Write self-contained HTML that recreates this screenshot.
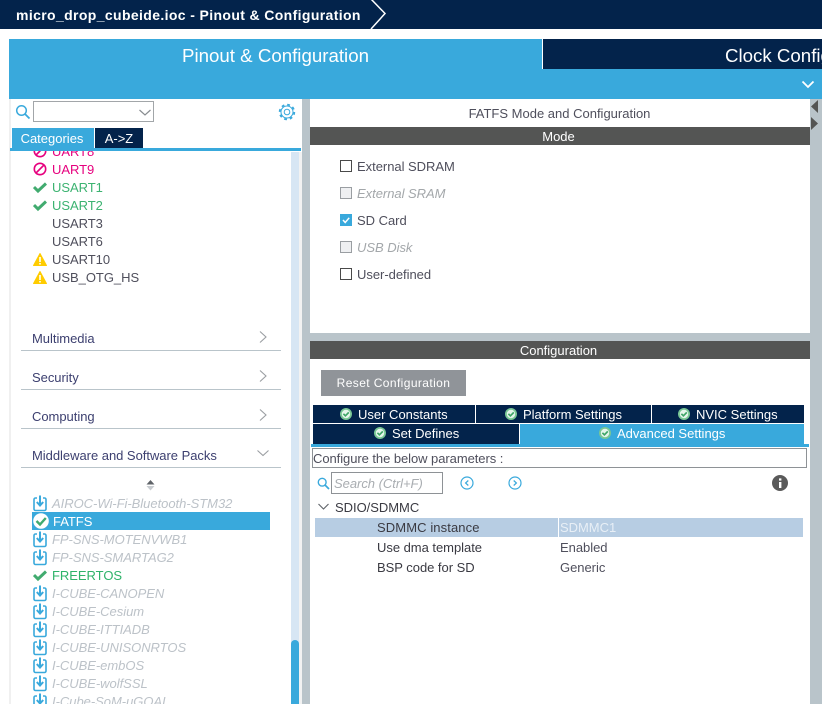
<!DOCTYPE html>
<html><head><meta charset="utf-8">
<style>
html,body{margin:0;padding:0;background:#fff}
#p{position:relative;width:822px;height:704px;overflow:hidden;background:#fff;font-family:"Liberation Sans",sans-serif;font-size:13px;color:#4f4f5c}
#p div,#p svg{position:absolute}
.t{white-space:nowrap;line-height:18px;height:18px;margin-top:1px;letter-spacing:-.03px}
.i{font-style:italic;color:#bcc2c8}
.mag{color:#e6007e}.grn{color:#3cb371}
.cat{left:21px;width:260px;height:1px;background:#b9c4ca}
.tab{background:#03234b}
.tt{color:#fff;white-space:nowrap;line-height:18px;height:18px;margin-top:1px}
</style></head><body>
<div id="p">
<svg width="0" height="0" style="position:absolute"><defs>
<g id="dl"><rect x="1" y="3" width="12" height="12.5" rx="1.5" fill="none" stroke="#39a9dc" stroke-width="1.6"/><rect x="4" y="0" width="6" height="4" fill="#fff"/><path d="M7 0.5V10M3.8 7L7 10.5L10.2 7" fill="none" stroke="#39a9dc" stroke-width="2"/></g>
<path id="ck" d="M1 6L5 10L13 2.5" fill="none" stroke="#41ab6f" stroke-width="3"/>
<g id="wn"><path d="M7 0.5L13.5 12.5H0.5Z" fill="#ffcc00" stroke="#ffcc00" stroke-linejoin="round"/><rect x="6.2" y="4" width="1.6" height="5" fill="#fff"/><rect x="6.2" y="10" width="1.6" height="1.5" fill="#fff"/></g>
<g id="no"><circle cx="7" cy="7" r="5.7" fill="none" stroke="#e6007e" stroke-width="1.6"/><path d="M3 11L11 3" stroke="#e6007e" stroke-width="1.6"/></g>
<g id="gc"><circle cx="6" cy="6" r="6" fill="#79c795"/><circle cx="6" cy="6" r="4.2" fill="#e6f5eb"/><path d="M3.4 5.8L5.4 7.8L8.8 4.4" fill="none" stroke="#3fa568" stroke-width="1.7"/></g>
</defs></svg>

<!-- top bar -->
<div style="left:0;top:0;width:822px;height:29px;background:#03234b"></div>
<div class="t" style="left:16px;top:5px;color:#fff;font-weight:bold;font-size:14px;letter-spacing:.37px">micro_drop_cubeide.ioc - Pinout &amp; Configuration</div>
<svg style="left:368px;top:0" width="20" height="29"><path d="M3 -1L17 13.5L3 29" fill="none" stroke="#fff" stroke-width="1.5"/></svg>

<!-- main tabs -->
<div style="left:9px;top:39px;width:813px;height:60px;background:#39a9dc"></div>
<div style="left:543px;top:39px;width:279px;height:30px;background:#03234b;border-left:1px solid #fff;margin-left:-1px"></div>
<div class="t" style="left:182px;top:44px;height:22px;line-height:22px;color:#fff;font-size:18.7px;letter-spacing:0">Pinout &amp; Configuration</div>
<div class="t" style="left:725px;top:44px;height:22px;line-height:22px;color:#fff;font-size:18.7px;letter-spacing:0">Clock Configuration</div>
<svg style="left:800px;top:79px" width="16" height="12"><path d="M2.5 2.5L8 8L13.5 2.5" fill="none" stroke="#fff" stroke-width="1.8"/></svg>

<!-- left panel -->
<div style="left:9px;top:99px;width:2px;height:605px;background:#f0f0f0"></div>
<svg style="left:15px;top:104px" width="16" height="16"><circle cx="6.5" cy="6.5" r="4.8" fill="none" stroke="#39a9dc" stroke-width="1.5"/><path d="M10 10L14.5 14.5" stroke="#39a9dc" stroke-width="1.8"/></svg>
<div style="left:33px;top:101px;width:119px;height:19px;background:#fff;border:1.5px solid #a2a6a9"></div>
<svg style="left:138px;top:108px" width="14" height="10"><path d="M1.5 2L7 7L12.5 2" fill="none" stroke="#888c90" stroke-width="1.2"/></svg>
<svg style="left:278px;top:103px" width="18" height="18" viewBox="0 0 18 18"><circle cx="9" cy="9" r="2.8" fill="none" stroke="#39a9dc" stroke-width="1"/><circle cx="9" cy="9" r="6" fill="none" stroke="#39a9dc" stroke-width="1"/><circle cx="9" cy="9" r="7.3" fill="none" stroke="#39a9dc" stroke-width="1.8" stroke-dasharray="2.8 2.93"/></svg>
<div style="left:12px;top:128px;width:80px;height:20px;background:#39a9dc;color:#fff;text-align:center;line-height:21px;padding-right:2px">Categories</div>
<div style="left:95px;top:128px;width:48px;height:20px;background:#03234b;color:#fff;text-align:center;line-height:21px">A-&gt;Z</div>
<div style="left:10px;top:148px;width:291px;height:3px;background:#39a9dc"></div>

<div style="left:291px;top:152px;width:8px;height:552px;background:#d7e6f4"></div>
<div style="left:299px;top:152px;width:3px;height:552px;background:#f2f2f2"></div>
<div style="left:291px;top:640px;width:8px;height:64px;background:#39a9dc;border-radius:4px 4px 0 0"></div>
<div style="left:302px;top:99px;width:8px;height:605px;background:#b9c4ca"></div>

<!-- list (clip) -->
<div style="left:11px;top:151px;width:280px;height:553px;overflow:hidden">
<div class="t mag" style="left:41px;top:-9px">UART8</div>
<svg style="left:22px;top:-7px" width="14" height="14"><use href="#no"/></svg>
<svg style="left:22px;top:11px" width="14" height="14"><use href="#no"/></svg>
<div class="t mag" style="left:41px;top:9px">UART9</div>
<svg style="left:22px;top:30px" width="14" height="13"><use href="#ck"/></svg>
<div class="t grn" style="left:41px;top:27px">USART1</div>
<svg style="left:22px;top:48px" width="14" height="13"><use href="#ck"/></svg>
<div class="t grn" style="left:41px;top:45px">USART2</div>
<div class="t" style="left:41px;top:63px">USART3</div>
<div class="t" style="left:41px;top:81px">USART6</div>
<svg style="left:22px;top:102px" width="14" height="14"><use href="#wn"/></svg>
<div class="t" style="left:41px;top:99px">USART10</div>
<svg style="left:22px;top:120px" width="14" height="14"><use href="#wn"/></svg>
<div class="t" style="left:41px;top:117px">USB_OTG_HS</div>
</div>

<div class="t" style="left:32px;top:329px;color:#3d4070">Multimedia</div>
<div class="cat" style="top:350px"></div>
<svg style="left:258px;top:330px" width="10" height="14"><path d="M2 1.5L8 7L2 12.5" fill="none" stroke="#9a9ea2" stroke-width="1.1"/></svg>
<div class="t" style="left:32px;top:368px;color:#3d4070">Security</div>
<div class="cat" style="top:389px"></div>
<svg style="left:258px;top:369px" width="10" height="14"><path d="M2 1.5L8 7L2 12.5" fill="none" stroke="#9a9ea2" stroke-width="1.1"/></svg>
<div class="t" style="left:32px;top:407px;color:#3d4070">Computing</div>
<div class="cat" style="top:428px"></div>
<svg style="left:258px;top:408px" width="10" height="14"><path d="M2 1.5L8 7L2 12.5" fill="none" stroke="#9a9ea2" stroke-width="1.1"/></svg>
<div class="t" style="left:32px;top:446px;color:#3d4070">Middleware and Software Packs</div>
<div class="cat" style="top:467px"></div>
<svg style="left:256px;top:449px" width="14" height="10"><path d="M1.5 1.5L7 6.5L12.5 1.5" fill="none" stroke="#9a9ea2" stroke-width="1.1"/></svg>

<svg style="left:145px;top:479px" width="11" height="13"><path d="M5.5 1L9.5 5.5H1.5Z" fill="#5f6368"/><path d="M1.5 7H9.5L5.5 11.5Z" fill="#c8ccd0"/></svg>

<svg style="left:33px;top:495px" width="14" height="17"><use href="#dl"/></svg>
<div class="t i" style="left:52px;top:494px">AIROC-Wi-Fi-Bluetooth-STM32</div>
<div style="left:32px;top:512px;width:238px;height:18px;background:#39a9dc"></div>
<svg style="left:33px;top:512px" width="17" height="18"><circle cx="8" cy="9" r="7.8" fill="#fff"/><path d="M3.5 9L7 12.5L12.8 6" fill="none" stroke="#41ab6f" stroke-width="2.4"/></svg>
<div class="t" style="left:53px;top:512px;color:#fff">FATFS</div>
<svg style="left:33px;top:531px" width="14" height="17"><use href="#dl"/></svg>
<div class="t i" style="left:52px;top:530px">FP-SNS-MOTENVWB1</div>
<svg style="left:33px;top:549px" width="14" height="17"><use href="#dl"/></svg>
<div class="t i" style="left:52px;top:548px">FP-SNS-SMARTAG2</div>
<svg style="left:33px;top:569px" width="14" height="13"><use href="#ck"/></svg>
<div class="t" style="left:52px;top:566px;color:#2fb36a">FREERTOS</div>
<svg style="left:33px;top:585px" width="14" height="17"><use href="#dl"/></svg>
<div class="t i" style="left:52px;top:584px">I-CUBE-CANOPEN</div>
<svg style="left:33px;top:603px" width="14" height="17"><use href="#dl"/></svg>
<div class="t i" style="left:52px;top:602px">I-CUBE-Cesium</div>
<svg style="left:33px;top:621px" width="14" height="17"><use href="#dl"/></svg>
<div class="t i" style="left:52px;top:620px">I-CUBE-ITTIADB</div>
<svg style="left:33px;top:639px" width="14" height="17"><use href="#dl"/></svg>
<div class="t i" style="left:52px;top:638px">I-CUBE-UNISONRTOS</div>
<svg style="left:33px;top:657px" width="14" height="17"><use href="#dl"/></svg>
<div class="t i" style="left:52px;top:656px">I-CUBE-embOS</div>
<svg style="left:33px;top:675px" width="14" height="17"><use href="#dl"/></svg>
<div class="t i" style="left:52px;top:674px">I-CUBE-wolfSSL</div>
<svg style="left:33px;top:693px" width="14" height="17"><use href="#dl"/></svg>
<div class="t i" style="left:52px;top:692px">I-Cube-SoM-uGOAL</div>

<!-- right side -->
<div style="left:810px;top:99px;width:12px;height:605px;background:#b9c4ca"></div>
<svg style="left:811px;top:99px" width="11" height="32"><path d="M7 1V14L0 7.5Z" fill="#545554"/><path d="M0 18V31L7 24.5Z" fill="#545554"/></svg>
<div style="left:310px;top:333px;width:500px;height:8px;background:#b9c4ca"></div>

<div class="t" style="left:310px;top:104px;width:499px;text-align:center;letter-spacing:0">FATFS Mode and Configuration</div>
<div style="left:310px;top:127px;width:500px;height:18px;background:#545554"></div>
<div class="t" style="left:310px;top:126px;width:497px;text-align:center;color:#fff;height:19px;line-height:19px;letter-spacing:0">Mode</div>

<div style="left:340px;top:160px;width:10px;height:10px;border:1px solid #4a4a4a;background:#fff"></div>
<div class="t" style="left:357px;top:157px">External SDRAM</div>
<div style="left:340px;top:187px;width:10px;height:10px;border:1px solid #9a9ea2;background:#eff0f2"></div>
<div class="t" style="left:357px;top:184px;font-style:italic;color:#a3a7aa">External SRAM</div>
<div style="left:340px;top:214px;width:12px;height:12px;background:#39a9dc"></div>
<svg style="left:340px;top:214px" width="12" height="12"><path d="M3 6L5.2 8.5L9.2 3.8" fill="none" stroke="#fff" stroke-width="1.5"/></svg>
<div class="t" style="left:357px;top:211px">SD Card</div>
<div style="left:340px;top:241px;width:10px;height:10px;border:1px solid #9a9ea2;background:#eff0f2"></div>
<div class="t" style="left:357px;top:238px;font-style:italic;color:#a3a7aa">USB Disk</div>
<div style="left:340px;top:268px;width:10px;height:10px;border:1px solid #4a4a4a;background:#fff"></div>
<div class="t" style="left:357px;top:265px">User-defined</div>

<div style="left:310px;top:341px;width:500px;height:18px;background:#545554"></div>
<div class="t" style="left:310px;top:340px;width:497px;text-align:center;color:#fff;height:19px;line-height:19px;letter-spacing:0">Configuration</div>
<div style="left:321px;top:370px;width:145px;height:26px;background:#909499;color:#fff;text-align:center;line-height:27px;font-size:12px;letter-spacing:.4px">Reset Configuration</div>

<div class="tab" style="left:313px;top:405px;width:162px;height:18px"></div>
<div class="tt" style="left:358px;top:405px">User Constants</div>
<svg style="left:340px;top:408px" width="12" height="12"><use href="#gc"/></svg>
<div class="tab" style="left:476px;top:405px;width:175px;height:18px"></div>
<div class="tt" style="left:523px;top:405px">Platform Settings</div>
<svg style="left:505px;top:408px" width="12" height="12"><use href="#gc"/></svg>
<div class="tab" style="left:652px;top:405px;width:152px;height:18px"></div>
<div class="tt" style="left:696px;top:405px">NVIC Settings</div>
<svg style="left:678px;top:408px" width="12" height="12"><use href="#gc"/></svg>
<div class="tab" style="left:313px;top:424px;width:206px;height:20px"></div>
<div class="tt" style="left:392px;top:424px">Set Defines</div>
<svg style="left:374px;top:427px" width="12" height="12"><use href="#gc"/></svg>
<div class="tab" style="left:520px;top:424px;width:284px;height:20px;background:#39a9dc"></div>
<div class="tt" style="left:617px;top:424px">Advanced Settings</div>
<svg style="left:599px;top:427px" width="12" height="12"><use href="#gc"/></svg>
<div style="left:311px;top:444px;width:498px;height:3px;background:#39a9dc"></div>

<div style="left:312px;top:448px;width:493px;height:18px;border:1px solid #8e9296"></div>
<div class="t" style="left:313px;top:449px;letter-spacing:-.06px">Configure the below parameters :</div>

<svg style="left:317px;top:477px" width="13" height="13"><circle cx="5.2" cy="5.2" r="3.9" fill="none" stroke="#39a9dc" stroke-width="1.4"/><path d="M8 8L12 12" stroke="#39a9dc" stroke-width="1.7"/></svg>
<div style="left:331px;top:472px;width:110px;height:20px;border:1px solid #8e9296"></div>
<div class="t" style="left:334px;top:474px;font-style:italic;color:#a9adb1">Search (Ctrl+F)</div>
<svg style="left:460px;top:476px" width="14" height="14"><circle cx="7" cy="7" r="6" fill="none" stroke="#39a9dc" stroke-width="1.2"/><path d="M8.3 4.5L5.6 7L8.3 9.5" fill="none" stroke="#39a9dc" stroke-width="1.2"/></svg>
<svg style="left:508px;top:476px" width="14" height="14"><circle cx="7" cy="7" r="6" fill="none" stroke="#39a9dc" stroke-width="1.2"/><path d="M5.7 4.5L8.4 7L5.7 9.5" fill="none" stroke="#39a9dc" stroke-width="1.2"/></svg>
<svg style="left:772px;top:475px" width="16" height="16"><circle cx="8" cy="8" r="8" fill="#5a5a5a"/><rect x="7" y="7" width="2.4" height="6" fill="#fff"/><rect x="7" y="3.4" width="2.4" height="2.2" fill="#fff"/></svg>

<svg style="left:317px;top:502px" width="13" height="10"><path d="M1.5 2L6.5 7L11.5 2" fill="none" stroke="#5f6368" stroke-width="1.1"/></svg>
<div class="t" style="left:335px;top:498px;color:#3a3a42">SDIO/SDMMC</div>
<div style="left:315px;top:518px;width:488px;height:19px;background:#b7cde3"></div>
<div style="left:558px;top:518px;width:1px;height:19px;background:#fff"></div>
<div class="t" style="left:377px;top:518px;letter-spacing:.1px;color:#3a3a42">SDMMC instance</div>
<div class="t" style="left:560px;top:518px;color:#e8eff6">SDMMC1</div>
<div class="t" style="left:377px;top:538px;color:#3a3a42">Use dma template</div>
<div class="t" style="left:560px;top:538px">Enabled</div>
<div class="t" style="left:377px;top:558px;color:#3a3a42">BSP code for SD</div>
<div class="t" style="left:560px;top:558px">Generic</div>
</div>
</body></html>
